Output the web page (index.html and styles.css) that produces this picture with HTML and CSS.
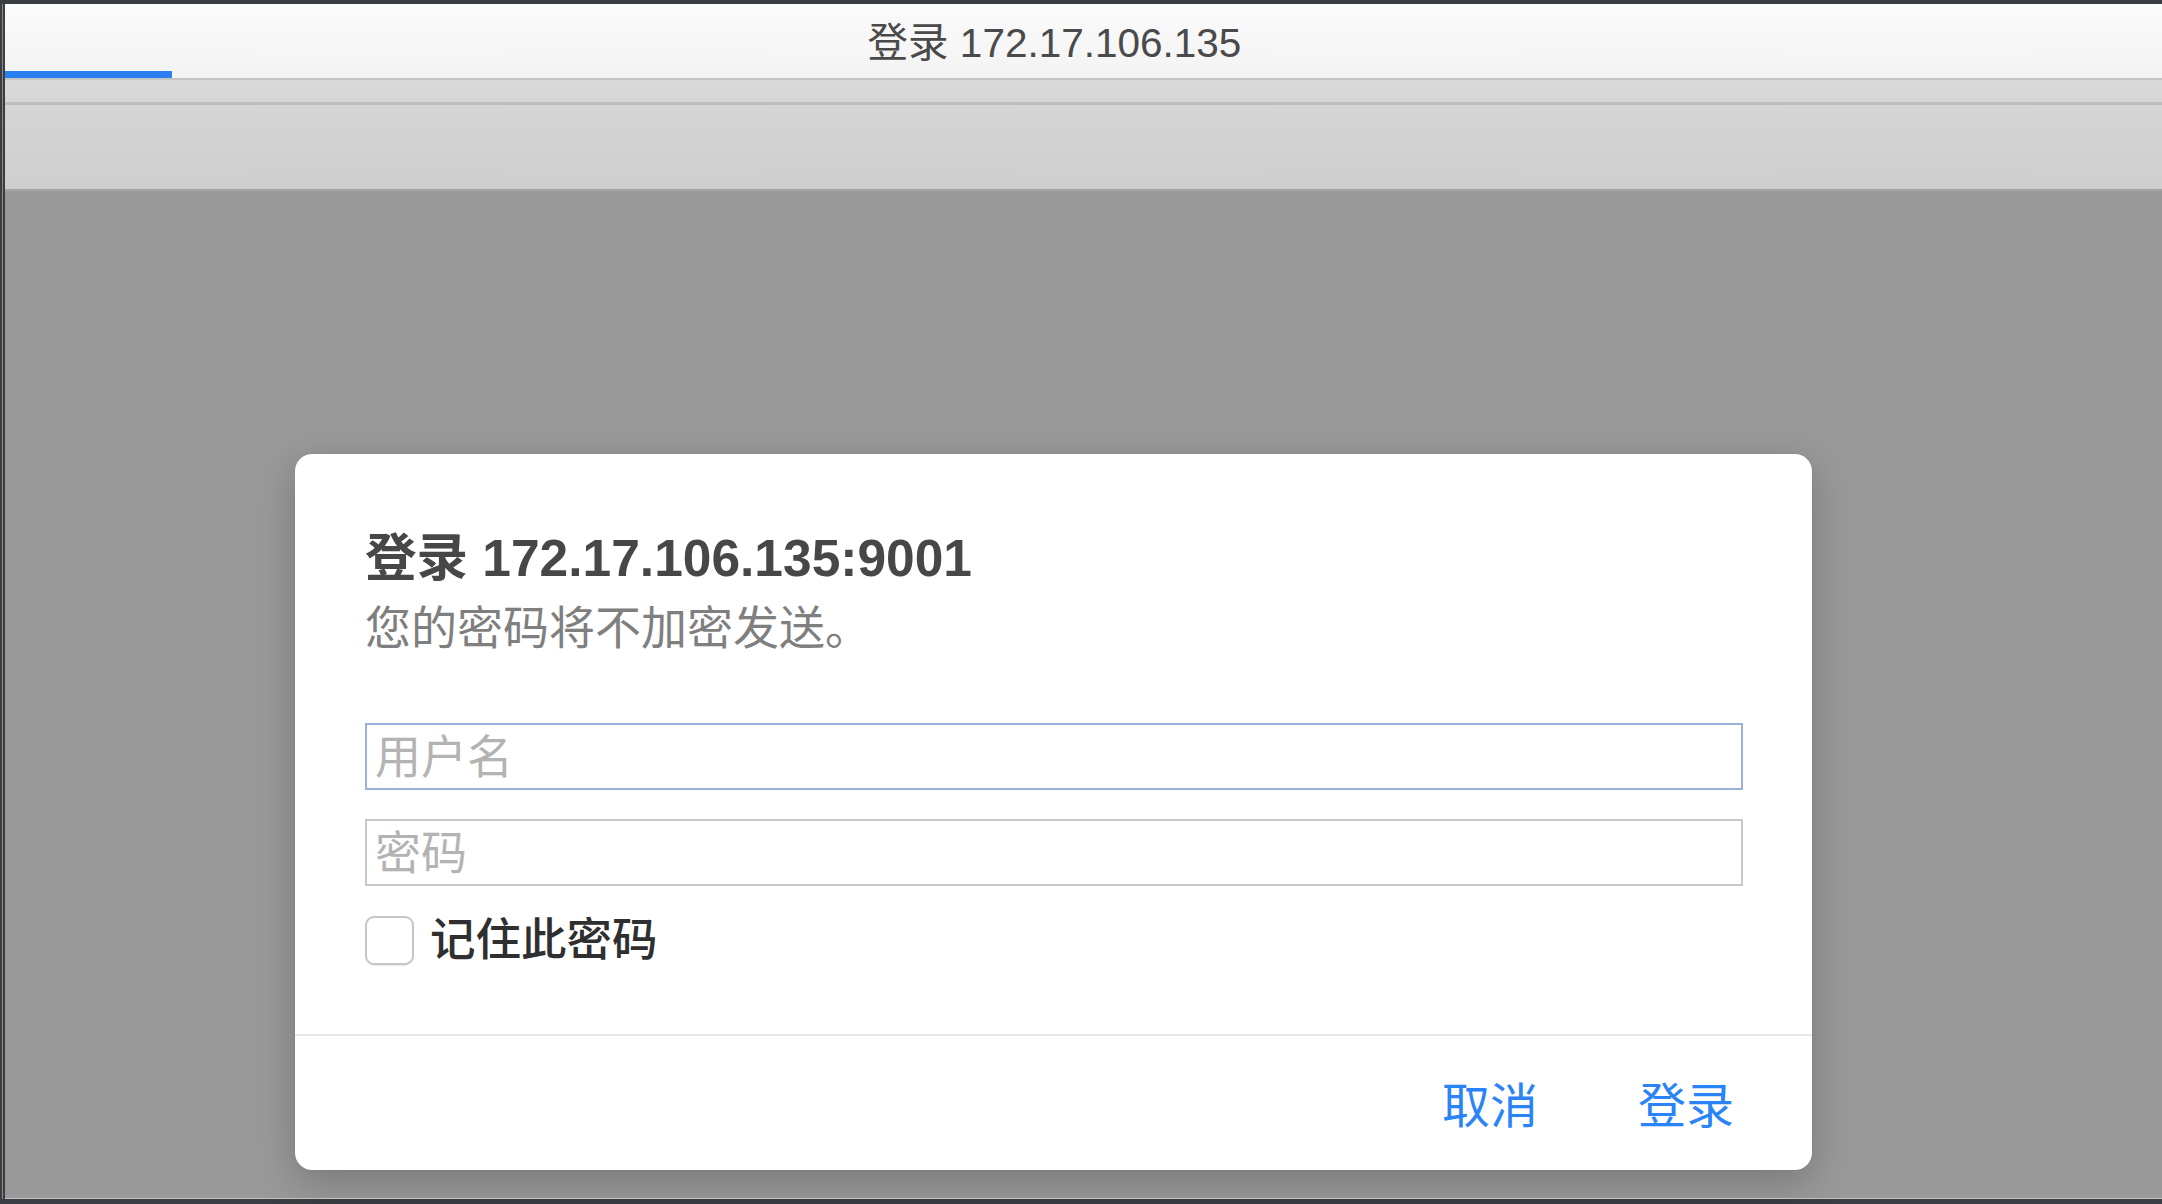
FILE: index.html
```html
<!DOCTYPE html>
<html lang="zh-CN">
<head>
<meta charset="utf-8">
<title>登录 172.17.106.135</title>
<link rel="stylesheet" href="styles.css">
</head>
<body>
<div class="frame">
  <div class="window">
    <header class="titlebar">
      <div class="title">登录 172.17.106.135</div>
      <div class="progress"></div>
    </header>
    <div class="line1"></div>
    <div class="band1"></div>
    <div class="line2"></div>
    <div class="band2"></div>
    <main class="content">
      <section class="dialog">
        <div class="body">
          <h1 class="dtitle">登录 172.17.106.135:9001</h1>
          <p class="dsub">您的密码将不加密发送。</p>
          <input class="field focused" type="text" placeholder="用户名">
          <input class="field" type="password" placeholder="密码">
          <label class="remember"><input class="cb" type="checkbox"><span>记住此密码</span></label>
        </div>
        <footer class="actions">
          <button class="btn">取消</button>
          <button class="btn">登录</button>
        </footer>
      </section>
    </main>
    <div class="bottomline"></div>
  </div>
</div>
</body>
</html>
```
FILE: styles.css
```css
* { box-sizing: border-box; }
html, body { margin: 0; padding: 0; }
body {
  width: 2162px;
  height: 1204px;
  overflow: hidden;
  background: #3a3d41;
  font-family: "Liberation Sans", "Noto Sans CJK SC", sans-serif;
}
.frame {
  height: 1204px;
  padding: 4px 0 5px 2px;
  background: #3a3d41;
}
.window {
  height: 100%;
  display: flex;
  flex-direction: column;
  border-left: 1px solid #8c8c8c;
  box-shadow: inset 2px 0 0 #3a3d41;
}
.window > * { margin-left: 2px; flex-shrink: 0; }
.titlebar {
  height: 74px;
  display: flex;
  flex-direction: column;
  background: linear-gradient(#fbfbfb, #f3f3f3);
}
.title {
  flex: 1;
  display: flex;
  align-items: center;
  justify-content: center;
  padding: 4px 58px 0 0;
  font-size: 40.5px;
  color: #4a4a4a;
}
.progress {
  width: 167px;
  height: 7px;
  background: #2a7ff2;
}
.line1 { height: 2px; background: #c4c4c4; }
.band1 { height: 22px; background: linear-gradient(#dadada, #d6d6d6); }
.line2 { height: 3px; background: linear-gradient(#c2c2c2, #bababa); }
.band2 {
  height: 86px;
  background: linear-gradient(#d5d5d5, #cecece);
  border-bottom: 2px solid #a3a3a3;
}
.content {
  flex: 1 1 auto;
  background: #999999;
  padding: 263px 0 0 290px;
}
.dialog {
  width: 1517px;
  height: 716px;
  background: #ffffff;
  border-radius: 17px;
  box-shadow: 0 12px 40px rgba(0, 0, 0, 0.22), 0 0 1px rgba(0, 0, 0, 0.2);
  display: flex;
  flex-direction: column;
}
.body {
  padding: 74px 69px 0 70px;
  display: flex;
  flex-direction: column;
  height: 582px;
  border-bottom: 2px solid #e8e8e8;
}
.dtitle {
  margin: 0;
  font-size: 51.5px;
  line-height: 60px;
  font-weight: 700;
  color: #474747;
}
.dsub {
  margin: 12px 0 0;
  font-size: 46px;
  line-height: 56px;
  color: #7f7f7f;
}
.field {
  display: block;
  width: 100%;
  height: 67px;
  margin: 0;
  border: 2px solid #c8c8c8;
  border-radius: 0;
  outline: none;
  padding: 0 8px;
  font-family: "Liberation Sans", "Noto Sans CJK SC", sans-serif;
  font-size: 46px;
  color: #333;
  background: #fff;
}
.field::placeholder { color: #b3b3b3; }
.field.focused {
  margin-top: 67px;
  border-color: #99b0d9;
}
.field + .field { margin-top: 29px; }
.remember {
  margin-top: 30px;
  display: flex;
  align-items: center;
  gap: 16px;
  font-size: 45.5px;
  line-height: 49px;
  color: #2f2f2f;
  font-weight: 500;
}
.cb {
  appearance: none;
  -webkit-appearance: none;
  margin: 0;
  width: 49px;
  height: 49px;
  border: 2px solid #c6c6c6;
  border-radius: 9px;
  background: #fff;
  box-shadow: 0 1px 1px rgba(0, 0, 0, 0.08);
}
.actions {
  flex: 1;
  display: flex;
  justify-content: flex-end;
  align-items: center;
  gap: 100px;
  padding: 8px 78px 0 0;
}
.btn {
  border: none;
  background: none;
  padding: 0;
  font-family: "Liberation Sans", "Noto Sans CJK SC", sans-serif;
  font-size: 48px;
  line-height: 60px;
  color: #2b84f7;
}
.bottomline { height: 1px; background: #c2c2c2; }
```
